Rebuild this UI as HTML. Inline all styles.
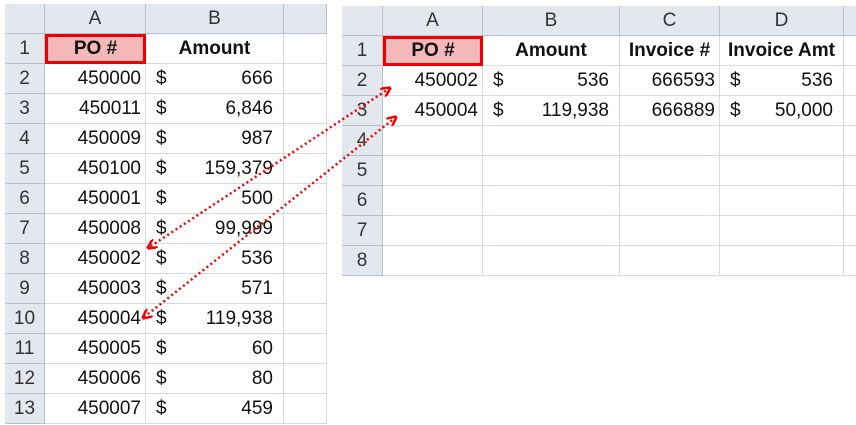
<!DOCTYPE html><html><head><style>
body{margin:0;width:856px;height:425px;background:#fff;position:relative;overflow:hidden;font-family:"Liberation Sans",sans-serif;font-size:19px;color:#111}
.c{position:absolute;box-sizing:border-box;border-right:1px solid #d4d9e2;border-bottom:1px solid #d4d9e2;height:30px;line-height:30px;white-space:nowrap;overflow:hidden}
.h{background:#e3e8ef;color:#333;text-align:center;border-color:#b8c0cc}
.r{text-align:right;padding-right:4px}
.b{font-weight:bold;text-align:center}
.po{background:#f4b8b8;border:3px solid #e00!important;line-height:24px}
</style></head><body>
<div id="L"></div><div id="R"></div>
<script>
function sheet(x0,y0,cols,rows,data,partial){
 let h='';let xs=[x0];cols.forEach(w=>xs.push(xs[xs.length-1]+w));
 const hdr=['','A','B','C','D'];
 for(let i=0;i<cols.length;i++)h+=`<div class="c h" style="left:${xs[i]}px;top:${y0}px;width:${cols[i]}px">${hdr[i]||''}</div>`;
 h+=`<div class="c h" style="left:${xs[cols.length]}px;top:${y0}px;width:${partial}px"></div>`;
 for(let r=0;r<rows;r++){let y=y0+30*(r+1);
  h+=`<div class="c h" style="left:${xs[0]}px;top:${y}px;width:${cols[0]}px">${r+1}</div>`;
  for(let i=1;i<cols.length;i++){let v=(data[r]||[])[i-1]||'';let cls='c';let inner=v;
   if(r==0){cls+=' b';if(i==1)cls+=' po';}
   else if(typeof v=='object'){inner=`<span style="position:absolute;left:10px">$</span><span style="position:absolute;right:10px">${v[0]}</span>`;}
   else cls+=' r';
   h+=`<div class="${cls}" style="left:${xs[i]}px;top:${y}px;width:${cols[i]}px">${inner}</div>`;}
  h+=`<div class="c" style="left:${xs[cols.length]}px;top:${y}px;width:${partial}px"></div>`;}
 return h;}
const L=[['PO #','Amount']];
[['450000','666'],['450011','6,846'],['450009','987'],['450100','159,379'],['450001','500'],['450008','99,999'],['450002','536'],['450003','571'],['450004','119,938'],['450005','60'],['450006','80'],['450007','459']].forEach(a=>L.push([a[0],[a[1]]]));
document.getElementById('L').innerHTML=sheet(5,4,[40,101,138],13,L,43);
const R=[['PO #','Amount','Invoice #','Invoice Amt'],['450002',['536'],'666593',['536']],['450004',['119,938'],'666889',['50,000']]];
document.getElementById('R').innerHTML=sheet(342,6,[41,100,137,100,124],8,R,14);
</script>
<svg style="position:absolute;left:0;top:0" width="856" height="425">
<defs><marker id="a" viewBox="0 0 10 10" refX="9" refY="5" markerWidth="4" markerHeight="4" orient="auto-start-reverse"><path d="M0,0L10,5L0,10" fill="none" stroke="#e00" stroke-width="2.5"/></marker></defs>
<g stroke="#e00" stroke-width="2.5" stroke-dasharray="2,3" fill="none">
<line x1="390" y1="88" x2="148" y2="248" marker-start="url(#a)" marker-end="url(#a)"/>
<line x1="396" y1="117" x2="143" y2="318" marker-start="url(#a)" marker-end="url(#a)"/>
</g></svg>
</body></html>
